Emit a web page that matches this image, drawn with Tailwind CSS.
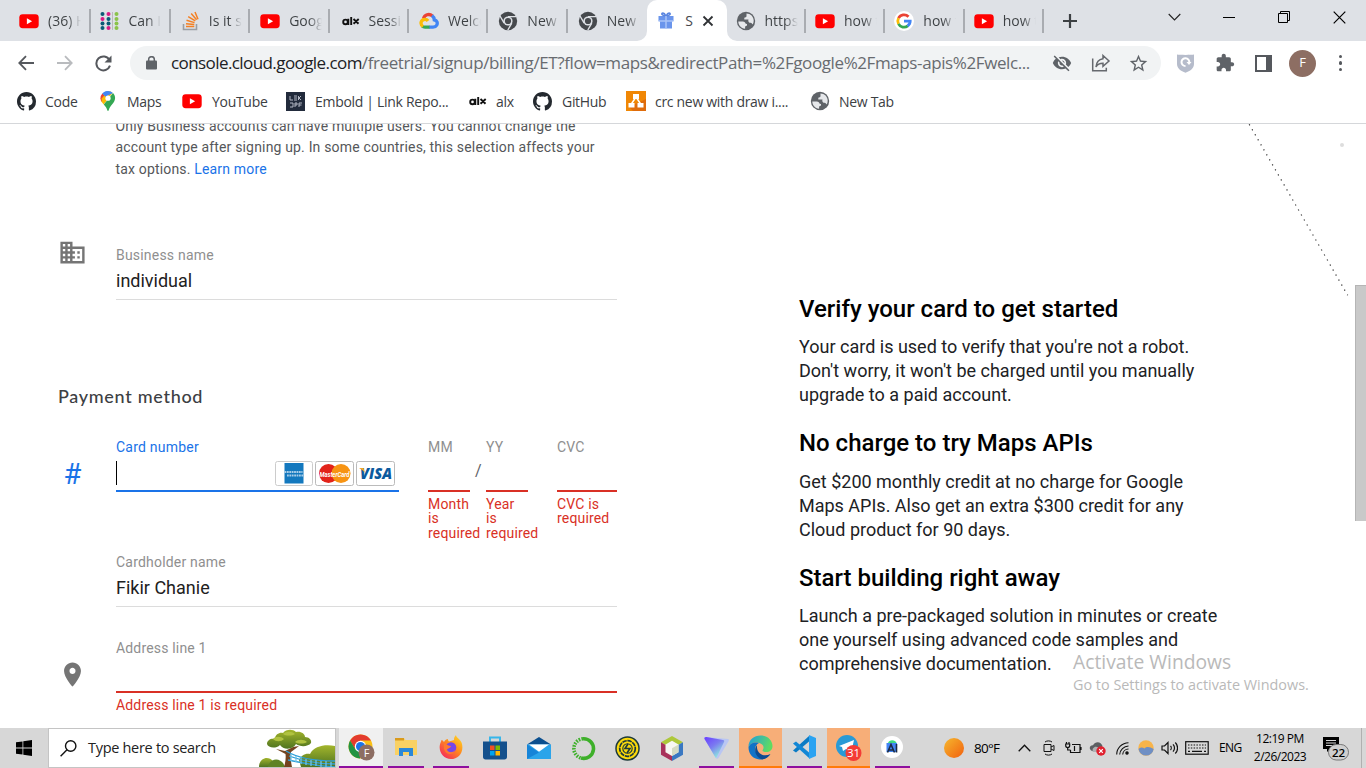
<!DOCTYPE html>
<html lang="en">
<head>
<meta charset="utf-8">
<title>Google Cloud sign up</title>
<script src="https://cdn.jsdelivr.net/npm/@tailwindcss/browser@4"></script>
</head>
<body class="relative w-[1366px] h-[768px] overflow-hidden bg-white flex flex-col font-['Roboto',sans-serif]">
<svg class="absolute w-0 h-0">
  <defs>
    <linearGradient id="sun" x1="0" y1="0" x2="1" y2="1"><stop offset="0" stop-color="#f5b82e"/><stop offset="1" stop-color="#f2600f"/></linearGradient>
    <linearGradient id="edgeA" x1="0" y1="0" x2="1" y2="0.3"><stop offset="0" stop-color="#1f9de0"/><stop offset="1" stop-color="#5edb62"/></linearGradient>
    <linearGradient id="proton" x1="0" y1="0" x2="0.7" y2="1"><stop offset="0" stop-color="#6a3dff"/><stop offset="0.5" stop-color="#7b7bf0"/><stop offset="1" stop-color="#8ff0dd"/></linearGradient>
    <linearGradient id="fox" x1="1" y1="0" x2="0.2" y2="1"><stop offset="0" stop-color="#ffe226"/><stop offset="0.5" stop-color="#ff8a1e"/><stop offset="1" stop-color="#f5275e"/></linearGradient>
    <linearGradient id="leaf" x1="0" y1="0" x2="0" y2="1"><stop offset="0" stop-color="#a3b52c"/><stop offset="1" stop-color="#4f7420"/></linearGradient>
  </defs>
  <symbol id="yt" viewBox="0 0 20 20"><rect x="0.3" y="3.2" width="19.4" height="14" rx="3.4" fill="#f00"/><path d="M7.900 7.200v6l5.200-3z" fill="#fff"/></symbol>
  <symbol id="gh" viewBox="0 0 16 16"><path fill="#24292f" d="M8 0C3.58 0 0 3.58 0 8c0 3.54 2.29 6.53 5.47 7.59.4.07.55-.17.55-.38 0-.19-.01-.82-.01-1.49-2.01.37-2.53-.49-2.69-.94-.09-.23-.48-.94-.82-1.13-.28-.15-.68-.52-.01-.53.63-.01 1.08.58 1.23.82.72 1.21 1.87.87 2.33.66.07-.52.28-.87.51-1.07-1.78-.2-3.64-.89-3.64-3.95 0-.87.31-1.59.82-2.15-.08-.2-.36-1.02.08-2.12 0 0 .67-.21 2.2.82.64-.18 1.32-.27 2-.27s1.36.09 2 .27c1.53-1.04 2.2-.82 2.2-.82.44 1.1.16 1.92.08 2.12.51.56.82 1.27.82 2.15 0 3.07-1.87 3.75-3.65 3.95.29.25.54.73.54 1.48 0 1.07-.01 1.93-.01 2.2 0 .21.15.46.55.38A8.01 8.01 0 0 0 16 8c0-4.42-3.58-8-8-8z"/></symbol>
  <symbol id="chromegrey" viewBox="0 0 20 20"><circle cx="10" cy="10" r="9.2" fill="#46494d"/><path d="M10 5.6h8.2M6.200 12.200L2 5M13.800 12.200L9.800 19" stroke="#dee1e6" stroke-width="1.4" fill="none"/><circle cx="10" cy="10" r="4.6" fill="#dee1e6"/><circle cx="10" cy="10" r="3.1" fill="#46494d"/></symbol>
  <symbol id="globe" viewBox="0 0 20 20"><circle cx="10" cy="10" r="9.200" fill="#5f6368"/><path d="M2.300 10.500h4.500c1.800 0 2.600 1.200 2.900 2.200l1.300.2v1.600l-1.900.9v2.300C5 17.400 2.300 14 2.300 10.500zM10.500 2.400c4 0 7.200 3.200 7.200 7.300 0 1.300-.4 2.600-1 3.700-.7-1.300-1.800-1.700-3.200-1.700-1.200-.8-1.500-1.900-1-3.100H8.300V6.800c1-.2 1.900-.5 2.200-1.500z" fill="#e6e8eb"/></symbol>
  <symbol id="alx" viewBox="0 0 20 20"><g fill="none" stroke="#111" stroke-width="1.900"><circle cx="4.500" cy="10.900" r="2.300"/><path d="M7.300 7.800v6.300M10.200 6v8.100M12.500 8l5 4.800M17.700 8l-5.200 4.800"/></g></symbol>
</svg>

<!-- Tab strip -->
<div class="h-[41px] shrink-0 bg-[#dee1e6] flex items-center pl-[12px] font-['Open_Sans',sans-serif] text-[14px] text-[#45484c]">
  <div class="w-[79.4px] h-6 flex items-center pl-[7px] border-r-2 border-[#a9acb1]"><svg class="size-5 shrink-0"><use href="#yt"/></svg><span class="ml-[9px] w-[33px] overflow-hidden whitespace-nowrap bg-linear-to-r from-[#3c4043] from-60% to-transparent bg-clip-text text-transparent">(36) H</span></div>
  <div class="w-[79.4px] h-6 flex items-center pl-[9px] border-r-2 border-[#a9acb1]"><svg class="size-5 shrink-0" viewBox="0 0 20 20"><g fill="#d81b84"><circle cx="8.5" cy="3" r="2"/><circle cx="2.5" cy="8" r="2"/><circle cx="8.5" cy="17" r="2"/></g><g fill="#0b5a75"><circle cx="2.5" cy="3" r="2"/><circle cx="8.5" cy="8" r="2"/><circle cx="2.5" cy="12.5" r="2"/><circle cx="8.5" cy="12.5" r="2"/><circle cx="2.5" cy="17" r="2"/></g><g fill="#8bc34a"><circle cx="16.5" cy="3" r="2"/><circle cx="16.5" cy="8" r="2"/><circle cx="16.5" cy="12.5" r="2"/><circle cx="16.5" cy="17" r="2"/></g><path d="M12.500 1v18" stroke="#bbb"/></svg><span class="ml-2 w-[33px] overflow-hidden whitespace-nowrap bg-linear-to-r from-[#3c4043] from-60% to-transparent bg-clip-text text-transparent">Can I</span></div>
  <div class="w-[79.4px] h-6 flex items-center pl-[10px] border-r-2 border-[#a9acb1]"><svg class="size-5 shrink-0" viewBox="0 0 20 20"><path d="M2.500 13v5.500h13V13" fill="none" stroke="#9b9ea3" stroke-width="1.6"/><path d="M5 15.600h8.300M5 12.700l8.300.9M5.500 9.200l8 2.400M7.200 5.600l7.100 4.300M10.200 2.600l5.400 6.200M14 1l3 7.200" stroke="#f48024" stroke-width="1.5"/></svg><span class="ml-2 w-[33px] overflow-hidden whitespace-nowrap bg-linear-to-r from-[#3c4043] from-60% to-transparent bg-clip-text text-transparent">Is it s</span></div>
  <div class="w-[79.4px] h-6 flex items-center pl-[10px] border-r-2 border-[#a9acb1]"><svg class="size-5 shrink-0"><use href="#yt"/></svg><span class="ml-[9px] w-[33px] overflow-hidden whitespace-nowrap bg-linear-to-r from-[#3c4043] from-60% to-transparent bg-clip-text text-transparent">Goog</span></div>
  <div class="w-[79.4px] h-6 flex items-center pl-[11px] border-r-2 border-[#a9acb1]"><svg class="size-5 shrink-0"><use href="#alx"/></svg><span class="ml-2 w-[33px] overflow-hidden whitespace-nowrap bg-linear-to-r from-[#3c4043] from-60% to-transparent bg-clip-text text-transparent">Sessi</span></div>
  <div class="w-[79.4px] h-6 flex items-center pl-[10px] border-r-2 border-[#a9acb1]"><svg class="size-5 shrink-0" viewBox="0 0 20 20" fill="none" stroke-width="3.3"><path d="M4.500 7.700C5.500 3.800 10 2.100 13.500 5" stroke="#ea4335"/><path d="M13 4.600c1.800 1.300 2.200 2.500 2.300 4.200 2.800.6 3.600 3.300 2.400 5.400-.8 1.400-2 1.900-3.700 1.900h-4" stroke="#4285f4"/><path d="M10.500 16.100H6c-1 0-2-.3-2.700-1" stroke="#34a853"/><path d="M4 15.500C.6 13.200 1.900 8.300 6 8.300c1.200 0 2.300.6 3 1.700" stroke="#fbbc05"/></svg><span class="ml-[9px] w-[33px] overflow-hidden whitespace-nowrap bg-linear-to-r from-[#3c4043] from-60% to-transparent bg-clip-text text-transparent">Welco</span></div>
  <div class="w-[79.4px] h-6 flex items-center pl-[10px] border-r-2 border-[#a9acb1]"><svg class="size-5 shrink-0"><use href="#chromegrey"/></svg><span class="ml-[9px] w-[33px] overflow-hidden whitespace-nowrap bg-linear-to-r from-[#3c4043] from-60% to-transparent bg-clip-text text-transparent">New T</span></div>
  <div class="w-[79.4px] h-6 flex items-center pl-[10px]"><svg class="size-5 shrink-0"><use href="#chromegrey"/></svg><span class="ml-[9px] w-[33px] overflow-hidden whitespace-nowrap bg-linear-to-r from-[#3c4043] from-60% to-transparent bg-clip-text text-transparent">New T</span></div>
  <div class="relative w-[79.4px] h-[41px] bg-white rounded-t-[10px] flex items-center pl-[10px]">
    <svg class="absolute -left-[10px] bottom-0 size-[10px]" viewBox="0 0 10 10"><path d="M10 0v10H0A10 10 0 0 0 10 0z" fill="#fff"/></svg>
    <svg class="absolute -right-[10px] bottom-0 size-[10px]" viewBox="0 0 10 10"><path d="M0 0v10h10A10 10 0 0 1 0 0z" fill="#fff"/></svg>
    <svg class="size-[18px]" viewBox="0 0 18 18"><path d="M1.500 4h15v5h-15zM3 9h12v7.500H3z" fill="#6a95ec"/><path d="M9 4C5 4 3.500 1.200 6 1c1.500 0 3 3 3 3s1.500-3 3-3c2.500.2 1 3-3 3z" fill="none" stroke="#5b86e0" stroke-width="1.5"/><path d="M9 4v12.500M1.500 9h15" stroke="#a9c3f7" stroke-width="1.5"/></svg>
    <span class="ml-[10px] w-[8px]">S</span>
    <svg class="ml-[9px] size-[12px]" viewBox="0 0 12 12"><path d="M1.500 1.500l9 9M10.500 1.500l-9 9" stroke="#2f3235" stroke-width="1.8"/></svg>
  </div>
  <div class="w-[79.4px] h-6 flex items-center pl-[9px] border-r-2 border-[#a9acb1]"><svg class="size-5 shrink-0"><use href="#globe"/></svg><span class="ml-[9px] w-[33px] overflow-hidden whitespace-nowrap bg-linear-to-r from-[#3c4043] from-60% to-transparent bg-clip-text text-transparent">https:</span></div>
  <div class="w-[79.4px] h-6 flex items-center pl-[9px] border-r-2 border-[#a9acb1]"><svg class="size-5 shrink-0"><use href="#yt"/></svg><span class="ml-[9px] w-[33px] overflow-hidden whitespace-nowrap bg-linear-to-r from-[#3c4043] from-60% to-transparent bg-clip-text text-transparent">how t</span></div>
  <div class="w-[79.4px] h-6 flex items-center pl-[9px] border-r-2 border-[#a9acb1]"><svg class="size-5 shrink-0" viewBox="0 0 20 20"><circle cx="10" cy="10" r="10" fill="#fff"/><g fill="none" stroke-width="2.8"><path d="M14.500 5.700A6.200 6.200 0 0 0 4.500 7.200" stroke="#ea4335"/><path d="M4.500 7.200a6.200 6.200 0 0 0 0 5.600" stroke="#fbbc05"/><path d="M4.500 12.800a6.200 6.200 0 0 0 9.300 2.100" stroke="#34a853"/><path d="M13.600 15c1.800-1.300 2.600-2.800 2.600-4.900H10" stroke="#4285f4"/></g></svg><span class="ml-[9px] w-[33px] overflow-hidden whitespace-nowrap bg-linear-to-r from-[#3c4043] from-60% to-transparent bg-clip-text text-transparent">how t</span></div>
  <div class="w-[79.4px] h-6 flex items-center pl-[9px] border-r-2 border-[#a9acb1]"><svg class="size-5 shrink-0"><use href="#yt"/></svg><span class="ml-[9px] w-[33px] overflow-hidden whitespace-nowrap bg-linear-to-r from-[#3c4043] from-60% to-transparent bg-clip-text text-transparent">how t</span></div>
  <svg class="ml-[18px] size-[16px] shrink-0" viewBox="0 0 16 16"><path d="M8 1v14M1 8h14" stroke="#3c4043" stroke-width="2.2"/></svg>
  <div class="ml-auto h-[34px] self-start flex items-center pr-[20px]">
    <svg class="w-[13px] h-[8px] mr-[42px]" viewBox="0 0 13 8"><path d="M.7 1l5.800 6 5.800-6" fill="none" stroke="#222" stroke-width="1.1"/></svg>
    <div class="w-3 h-px bg-black mr-[43px]"></div>
    <svg class="size-[12px] mr-[43px]" viewBox="0 0 12 12" fill="none" stroke="#000"><path d="M.5 2.500h9v9h-9zM2.500 2.500v-2h9v9h-2"/></svg>
    <svg class="size-[13px]" viewBox="0 0 13 13"><path d="M.7.700l11.600 11.600M12.300.700L.7 12.300" stroke="#000" stroke-width="1.2"/></svg>
  </div>
</div>

<!-- Toolbar -->
<div class="h-[44px] shrink-0 flex items-center pl-[18px] pr-[21px] font-['Open_Sans',sans-serif]">
  <svg class="w-4 h-4" viewBox="0 0 16 16" fill="none" stroke="#55585d" stroke-width="1.8"><path d="M16 8H1.500M8 1.200L1.300 8 8 14.800"/></svg>
  <svg class="ml-[23px] w-4 h-4" viewBox="0 0 16 16" fill="none" stroke="#b9bbbe" stroke-width="1.8"><path d="M0 8h14.500M8 1.200L14.700 8 8 14.800"/></svg>
  <svg class="ml-[22px] size-[17px]" viewBox="0 0 17 17"><path d="M14.500 5A7 7 0 1 0 15 10.700" fill="none" stroke="#55585d" stroke-width="2"/><path d="M16.500.5v7h-7z" fill="#55585d"/></svg>
  <div class="ml-[18px] w-[1031px] h-[34px] rounded-full bg-[#f1f3f4] flex items-center pl-4">
    <svg class="w-[11px] h-[14px]" viewBox="0 0 11 14"><rect y="4.5" width="11" height="9" rx="1" fill="#5f6368"/><path d="M2.700 5V3.200a2.800 2.500 0 0 1 5.600 0V5" fill="none" stroke="#5f6368" stroke-width="1.5"/></svg>
    <div class="ml-[14px] w-[862px] whitespace-nowrap text-[17px] tracking-[-0.4px] text-[#686b70]"><span class="tracking-[-0.58px] text-[#202124]">console.cloud.google.com</span>/freetrial/signup/billing/ET?flow=maps&amp;redirectPath=%2Fgoogle%2Fmaps-apis%2Fwelc...</div>
    <svg class="ml-[19px] size-5" viewBox="0 0 24 24"><path fill="#5f6368" d="M12 7c2.760 0 5 2.240 5 5 0 .65-.13 1.260-.36 1.830l2.920 2.920c1.510-1.260 2.700-2.890 3.430-4.750-1.730-4.390-6-7.500-11-7.500-1.400 0-2.740.25-3.980.7l2.160 2.160C10.740 7.130 11.350 7 12 7zM2 4.270l2.280 2.280.46.460C3.080 8.300 1.780 10.020 1 12c1.730 4.390 6 7.500 11 7.500 1.550 0 3.030-.3 4.380-.84l.42.420L19.730 22 21 20.730 3.270 3 2 4.270zM7.530 9.800l1.550 1.550c-.05.21-.08.430-.08.650 0 1.660 1.340 3 3 3 .22 0 .44-.03.650-.08l1.550 1.550c-.67.33-1.410.530-2.200.530-2.760 0-5-2.240-5-5 0-.79.2-1.530.530-2.200zm4.310-.78l3.150 3.150.02-.16c0-1.660-1.340-3-3-3l-.17.010z"/></svg>
    <svg class="ml-[19px] size-5" viewBox="0 0 20 20" fill="none" stroke="#66696e" stroke-width="1.5"><path d="M1.700 5.500v12.300h13.600v-3"/><path d="M12 2.500l6 5.500-6 5.300v-3c-3.500 0-5.500 1-7 3.700.3-4 2.500-7.700 7-8.300z"/></svg>
    <svg class="ml-[17px] size-[21px]" viewBox="0 0 24 24"><path fill="#5f6368" d="M22 9.240l-7.190-.62L12 2 9.190 8.630 2 9.240l5.460 4.730L5.820 21 12 17.270 18.180 21l-1.630-7.030L22 9.240zM12 15.400l-3.760 2.270 1-4.280-3.320-2.880 4.380-.38L12 6.100l1.710 4.040 4.380.38-3.320 2.880 1 4.280L12 15.400z"/></svg>
  </div>
  <svg class="ml-[16px] w-[17px] h-5" viewBox="0 0 17 20"><path d="M0 1.500C3 2 14 2 17 1.500V11c0 4.500-4 7-8.500 8.800C4 18 0 15.500 0 11z" fill="#b6bccb"/><path d="M12.300 9.500A3.900 3.900 0 1 0 8.500 13" fill="none" stroke="#fff" stroke-width="2"/><path d="M9.500 9h5l-2.500 3z" fill="#fff"/></svg>
  <svg class="ml-[21px] size-5" viewBox="0 0 24 24"><path fill="#5f6368" d="M20.500 11H19V7c0-1.100-.9-2-2-2h-4V3.500C13 2.120 11.880 1 10.500 1S8 2.120 8 3.500V5H4c-1.100 0-1.990.9-1.990 2v3.800H3.500c1.490 0 2.700 1.210 2.700 2.700s-1.210 2.700-2.700 2.700H2V20c0 1.100.9 2 2 2h3.800v-1.500c0-1.490 1.210-2.700 2.700-2.700 1.490 0 2.700 1.210 2.700 2.700V22H17c1.100 0 2-.9 2-2v-4h1.500c1.380 0 2.500-1.120 2.500-2.500S21.880 11 20.500 11z"/></svg>
  <div class="ml-[20px] w-[17px] h-[17px] border-2 border-r-[6px] border-[#55585d]"></div>
  <div class="ml-[17px] size-[27px] rounded-full bg-[#8d6e63] text-white text-[13px] flex items-center justify-center">F</div>
  <div class="ml-auto mr-[3px] flex flex-col gap-[3px]"><i class="size-[3.3px] rounded-full bg-[#55585d]"></i><i class="size-[3.3px] rounded-full bg-[#55585d]"></i><i class="size-[3.3px] rounded-full bg-[#55585d]"></i></div>
</div>

<!-- Bookmarks -->
<div class="h-[39px] shrink-0 border-b border-[#d5d7da] flex items-center pb-[6px] pl-[17px] font-['Open_Sans',sans-serif] text-[14px] tracking-[-0.3px] text-[#3c4043] whitespace-nowrap">
  <div class="w-[83px] flex items-center"><svg class="size-[19px] mr-[9px]"><use href="#gh"/></svg>Code</div>
  <div class="w-[82px] flex items-center"><svg class="w-4 h-5 mr-[11px]" viewBox="0 0 16 20"><path d="M8 0a7.200 7.200 0 0 0-5.600 2.600L6 6z" fill="#1a73e8"/><path d="M2.400 2.600A7 7 0 0 0 1.700 11L6 6z" fill="#ea4335"/><path d="M1.700 11l2 2.500L12.500 2C11.300.700 9.700 0 8 0L1.700 7.500z" fill="#fbbc04"/><path d="M8 0a7.200 7.200 0 0 1 5 2L5.500 5.800 2.400 2.600A7.200 7.200 0 0 1 8 0z" fill="#4285f4"/><path d="M13 2c4 4.500 1.500 8.500-.8 11.300C10.500 15.500 9.200 17 8.700 19.300c-.3.900-1.100.9-1.400 0C6.800 17 5.500 15.500 3.800 13.500z" fill="#34a853"/><circle cx="8" cy="7.200" r="2.600" fill="#fff"/></svg>Maps</div>
  <div class="w-[104px] flex items-center"><svg class="size-5 mr-[10px]"><use href="#yt"/></svg>YouTube</div>
  <div class="w-[182px] flex items-center"><svg class="size-[19px] mr-[10px]" viewBox="0 0 19 19"><rect width="19" height="19" fill="#222b3c"/><path d="M4 4v4h3M8 4h3M8 6h3M8 8h3M12.500 4v4M15 4l-2 2 2 2M4 11h3v4H4M9 11v4M9 11h2v2H9M13 15v-4h3M13 13h2.500" stroke="#b3b8c4" fill="none"/></svg>Embold | Link Repo...</div>
  <div class="w-[65px] flex items-center"><svg class="size-5 mr-[8px]"><use href="#alx"/></svg>alx</div>
  <div class="w-[93px] flex items-center"><svg class="size-[19px] mr-[10px]"><use href="#gh"/></svg>GitHub</div>
  <div class="w-[184px] flex items-center"><svg class="size-5 mr-[9px]" viewBox="0 0 20 20"><path d="M0 0h20v20H0z" fill="#f08705"/><path d="M20 8v12H7l-4-4z" fill="#df6c0c"/><path d="M10 6L5 13.500M10 6l5 7.500" stroke="#fff" stroke-width="1.5"/><path d="M7 3h6v5H7zM2.500 12h6v4.500h-6zM11.500 12h6v4.500h-6z" fill="#fff"/></svg>crc new with draw i....</div>
  <div class="flex items-center"><svg class="size-5 mr-[9px]"><use href="#globe"/></svg>New Tab</div>
</div>

<!-- Page -->
<main class="relative h-[604px] overflow-hidden flex">
  <div class="w-[799px] pl-[58px] shrink-0">
    <p class="-mt-[8.5px] ml-[57.5px] w-[520px] text-[14px] leading-[21.5px] tracking-[0.17px] text-[#55575a]">Only Business accounts can have multiple users. You cannot change the<br>account type after signing up. In some countries, this selection affects your<br>tax options. <a class="text-[#1a73e8]">Learn more</a></p>

    <div class="mt-[60px] h-[60px] flex">
      <svg class="w-[58px] h-[29px] -mt-[2px] pr-[29px]" viewBox="0 0 24 24"><path fill="#757575" d="M12 7V3H2v18h20V7H12zM6 19H4v-2h2v2zm0-4H4v-2h2v2zm0-4H4V9h2v2zm0-4H4V5h2v2zm4 12H8v-2h2v2zm0-4H8v-2h2v2zm0-4H8V9h2v2zm0-4H8V5h2v2zm10 12h-8v-2h2v-2h-2v-2h2v-2h-2V9h8v10zm-2-8h-2v2h2v-2zm0 4h-2v2h2v-2z"/></svg>
      <div class="w-[501px] pt-[5px] border-b border-[#dcdcdc]">
        <div class="h-5 leading-5 text-[14px] tracking-[0.2px] text-[#8f8f8f]">Business name</div>
        <div class="mt-[2px] h-7 leading-7 text-[18px] text-[#212121]">individual</div>
      </div>
    </div>

    <h2 class="mt-[84px] h-6 leading-6 text-[18px] font-medium tracking-[0.7px] text-[#3c4043] font-['Lato',sans-serif]">Payment method</h2>

    <div class="mt-[29px] h-[115px] flex">
      <div class="w-[58px] pt-[20px] pl-[5.5px] text-[29px] leading-[34px] text-[#1a73e8]">#</div>
      <div class="w-[283px]">
        <div class="h-5 leading-5 text-[14px] tracking-[0.22px] text-[#1a73e8]">Card number</div>
        <div class="h-[35px] border-b-2 border-[#1a73e8] flex items-start justify-end pr-[4px] gap-[2px] pt-[4px]">
          <div class="w-px h-6 bg-black mr-auto"></div>
          <svg class="w-[38px] h-[25px]" viewBox="0 0 38 25"><rect x=".5" y=".5" width="37" height="24" rx="2" fill="#fff" stroke="#ccc"/><rect x="9.500" y="2" width="19" height="20.5" fill="#1378be"/><path d="M9.500 11h18M12 14.500h16" stroke="#a9cde8" stroke-width="2.2" stroke-dasharray="1.8 .6"/></svg>
          <svg class="w-[39px] h-[25px]" viewBox="0 0 39 25"><rect x=".5" y=".5" width="38" height="24" rx="2" fill="#fff" stroke="#bbb"/><circle cx="13.500" cy="12.500" r="9.500" fill="#e2231a"/><circle cx="26" cy="12.500" r="9.500" fill="#f79413"/><text x="4.500" y="15.500" font-size="7.500" font-weight="bold" font-style="italic" fill="#fff" textLength="30" lengthAdjust="spacingAndGlyphs">MasterCard</text></svg>
          <svg class="w-[39px] h-[25px]" viewBox="0 0 39 25"><rect x=".5" y=".5" width="38" height="24" rx="2" fill="#fff" stroke="#bbb"/><text x="4" y="18" font-family="Open Sans" font-size="15" font-weight="800" font-style="italic" fill="#0b5a9e" textLength="32" lengthAdjust="spacingAndGlyphs">VISA</text><path d="M3 7h4.500l1.500 5C7.500 10 6 8.500 3 7z" fill="#f5a623"/></svg>
        </div>
      </div>
      <div class="ml-[29px] w-[42px] text-[14px] tracking-[0.17px]">
        <div class="h-5 leading-5 text-[#8f8f8f]">MM</div>
        <div class="h-[35px] border-b-2 border-[#d93025]"></div>
        <div class="mt-[5px] leading-[14.3px] text-[#d93025]">Month is required</div>
      </div>
      <div class="w-4 pt-[24px] pl-[5px] text-[16px] leading-[20px] text-[#5f6368]">/</div>
      <div class="w-[42px] text-[14px] tracking-[0.17px]">
        <div class="h-5 leading-5 text-[#8f8f8f]">YY</div>
        <div class="h-[35px] border-b-2 border-[#d93025]"></div>
        <div class="mt-[5px] leading-[14.3px] text-[#d93025]">Year<br>is required</div>
      </div>
      <div class="ml-[29px] w-[60px] text-[14px] tracking-[0.17px]">
        <div class="h-5 leading-5 text-[#8f8f8f]">CVC</div>
        <div class="h-[35px] border-b-2 border-[#d93025]"></div>
        <div class="mt-[5px] leading-[14.3px] text-[#d93025]">CVC is required</div>
      </div>
    </div>

    <div class="ml-[58px] w-[501px] h-[55px] border-b border-[#dcdcdc]">
      <div class="h-5 leading-5 text-[14px] tracking-[0.2px] text-[#8f8f8f]">Cardholder name</div>
      <div class="mt-[2px] h-7 leading-7 text-[18px] text-[#212121]">Fikir Chanie</div>
    </div>

    <div class="mt-[31px] flex">
      <svg class="w-[58px] h-[29px] mt-[22px] pr-[29px]" viewBox="0 0 24 24"><path fill="#757575" d="M12 2C8.130 2 5 5.130 5 9c0 5.250 7 13 7 13s7-7.750 7-13c0-3.870-3.130-7-7-7zm0 9.500c-1.380 0-2.500-1.120-2.500-2.500s1.120-2.500 2.500-2.500 2.500 1.120 2.500 2.500-1.120 2.500-2.500 2.500z"/></svg>
      <div class="w-[501px] text-[14px] tracking-[0.17px]">
        <div class="h-[55px] leading-5 border-b-2 border-[#d93025] text-[#8f8f8f]">Address line 1</div>
        <div class="mt-[2px] leading-5 text-[#d93025]">Address line 1 is required</div>
      </div>
    </div>
  </div>

  <div class="w-[440px] pt-[170px] text-[18px] leading-6 text-[#202124]">
    <h3 class="text-[24px] leading-[30px] font-medium text-black">Verify your card to get started</h3>
    <p class="mt-[11px]">Your card is used to verify that you're not a robot.<br>Don't worry, it won't be charged until you manually<br>upgrade to a paid account.</p>
    <h3 class="mt-[21px] text-[24px] leading-[30px] font-medium text-black">No charge to try Maps APIs</h3>
    <p class="mt-[12px]">Get $200 monthly credit at no charge for Google<br>Maps APIs. Also get an extra $300 credit for any<br>Cloud product for 90 days.</p>
    <h3 class="mt-[21px] text-[24px] leading-[30px] font-medium text-black">Start building right away</h3>
    <p class="mt-[11px]">Launch a pre-packaged solution in minutes or create<br>one yourself using advanced code samples and<br>comprehensive documentation.</p>
  </div>

  <svg class="absolute left-[1240px] top-0 w-[115px] h-[180px]" viewBox="0 0 115 180"><path d="M9.200.3L107.700 171.300" stroke="#333" stroke-width="1.2" stroke-dasharray="1.200 4.580"/><circle cx="102" cy="21" r="2" fill="#ddd"/></svg>
  <div class="ml-auto mt-[161px] w-[11px] h-[236px] bg-[#c9c9c9] border-t border-l border-[#b5b5b5]"></div>
  <div class="absolute left-[1073px] top-[525px] font-['Open_Sans',sans-serif] text-[#b9b9b9] whitespace-nowrap">
    <div class="text-[19.3px] leading-[26px]">Activate Windows</div>
    <div class="text-[14.4px] leading-5">Go to Settings to activate Windows.</div>
  </div>
</main>

<!-- Taskbar -->
<footer class="h-10 shrink-0 bg-[#d7d7d7] flex items-stretch font-['Open_Sans',sans-serif] text-black">
  <div class="w-[48px] flex items-center justify-center"><svg class="size-4" viewBox="0 0 16 16"><path d="M0 2.300l6.500-.9v6.200H0zM7.300 1.200L16 0v7.600H7.300zM0 8.400h6.500v6.200L0 13.700zM7.300 8.400H16V16l-8.700-1.200z"/></svg></div>
  <div class="w-[288px] bg-white border border-[#c4c4c4] flex items-center pl-[11px]">
    <svg class="w-[17px] h-[17px] shrink-0" viewBox="0 0 17 17" fill="none" stroke="#111" stroke-width="1.4"><circle cx="10.700" cy="6" r="5.2"/><path d="M7 9.700L.6 16.300"/></svg>
    <span class="ml-[11px] text-[14.5px] tracking-[-0.3px] text-[#222] whitespace-nowrap">Type here to search</span>
    <svg class="ml-auto w-[76px] h-[38px] shrink-0" viewBox="0 0 76 38"><path d="M40 31c2-4 6-7 11-6C55 17 66 15 76 17v21H42z" fill="url(#leaf)"/><path d="M0 38c0-9 9-12 14-6l3 6z" fill="url(#leaf)"/><path d="M9 38c2-10 14-10 17 0z" fill="#5f8324"/><path d="M25 38c1.500-5 2-9 1.500-13L17 20l9 2 8-4 6-1-8 6c-1 5 0 10 1 15z" fill="#74431f"/><path d="M8 15c0-4 4-6 8-5 0-5 5-7 8-6 3-4 10-4 13-1 5-1 9 2 9 5 4 0 7 3 6 6-3 4-11 4-15 1-3 6-13 6-16 1-4 4-12 3-13-1z" fill="url(#leaf)"/><path d="M14 10c2-3 8-3 11 0-3 3-8 3-11 0zM24 5c3-3 9-3 12 0-3 2-9 2-12 0zM36 13c3-3 9-3 12 0-3 2-9 2-12 0z" fill="#b0c240"/><path d="M27 22c10 6 28 10 49 10M29 31c14 3 28 6 47 7M30 27c14 5 28 8 46 8" stroke="#2e9fd8" stroke-width="1.3" fill="none"/><path d="M32 25v7M37 27v6M42 28v7M47 30v6M52 31v6M57 31v6M62 32v6M67 32v6M72 33v5" stroke="#6ec3ea" stroke-width="1.3"/></svg>
  </div>
  <div class="ml-[3px] w-[44px] bg-[#f0f0f0] border-b-2 border-[#8e0f9e] flex items-center justify-center"><svg class="size-[27px]" viewBox="0 0 27 27"><circle cx="12.500" cy="12.500" r="12" fill="#fbc116"/><path d="M2.100 6.500A12 12 0 0 1 23 6.500H12.500L7.300 15.500z" fill="#e33b2e"/><path d="M2.100 6.500L7.500 15.500 14 17l-2 7.500A12 12 0 0 1 2.100 6.500z" fill="#229342"/><circle cx="12.500" cy="12.500" r="5.700" fill="#fff"/><circle cx="12.500" cy="12.500" r="4.500" fill="#1a73e8"/><circle cx="18.500" cy="18.500" r="8" fill="#8d6e63"/><text x="18.500" y="22.500" font-family="Open Sans" font-size="11" text-anchor="middle" fill="#fff">F</text></svg></div>
  <div class="ml-[5px] w-[36px] border-b-2 border-[#8e0f9e] flex items-center justify-center"><svg class="w-[22px] h-[20px]" viewBox="0 0 22 20"><path d="M0 1h9l1.500 2H22v15H0z" fill="#f9d163"/><path d="M0 1h9v2.500H0z" fill="#d99a1c"/><path d="M4 11h14v8h-4v-4H8v4H4z" fill="#2b88d8"/></svg></div>
  <div class="ml-[9px] w-[36px] border-b-2 border-[#8e0f9e] flex items-center justify-center"><svg class="size-[24px]" viewBox="0 0 24 24"><path d="M2.500 5c1 .3 2 1.200 2.500 2C6 5 7.500 4 9 4c-.3 1 .2 2 1 2.500L15 5c0-2 .5-3.500 2-5 0 3 5 4 6 9 2 9-4 15-11 15S0 18 .7 11C1 8.500 2 7 2.500 5z" fill="url(#fox)"/><circle cx="12" cy="12.500" r="5.300" fill="#7846e8"/><path d="M5 9c3 0 4 2 7 2-1 3-4 2-4 4 2 3 6 3 8 0-1 5-9 6-11-1z" fill="#ff7a2f"/></svg></div>
  <div class="ml-[4px] w-[44px] flex items-center justify-center"><svg class="w-[24px] h-[24px]" viewBox="0 0 24 24"><path d="M7 7V1.500h10V7" fill="none" stroke="#37b6ea" stroke-width="2"/><path d="M0 5.500h24V21c0 1.500-1 2.500-2.500 2.500h-19C1 23.500 0 22.500 0 21z" fill="#14508c"/><path d="M7 9.500h4.500V14H7z" fill="#f25022"/><path d="M12.500 9.500H17V14h-4.500z" fill="#7fba00"/><path d="M7 15h4.500v4.500H7z" fill="#00a4ef"/><path d="M12.500 15H17v4.500h-4.500z" fill="#ffb900"/></svg></div>
  <div class="w-[44.4px] flex items-center justify-center"><svg class="w-[24px] h-[24px]" viewBox="0 0 24 24"><path d="M0 8.500L12 1l12 7.500z" fill="#0b4f8f"/><path d="M0 8.500h24V23H0z" fill="#2ba4ea"/><path d="M2 8.500h20l-10 7.300z" fill="#fff"/><path d="M0 8.500l12 8L0 23z" fill="#1684d8"/></svg></div>
  <div class="w-[44.4px] flex items-center justify-center"><svg class="size-[25px]" viewBox="0 0 25 25" fill="none" stroke="#3eb02a"><path d="M12 2.800A9.800 9.800 0 1 1 10 22" stroke-width="3.6"/><path d="M12 2.800A9.800 9.800 0 0 0 10 22" stroke-width="3.6" stroke-dasharray="1.600 1.200"/></svg></div>
  <div class="w-[44.4px] flex items-center justify-center"><svg class="size-[25px]" viewBox="0 0 25 25"><circle cx="12.500" cy="12.500" r="11.500" fill="#fbd90b" stroke="#1d3a3a" stroke-width="1.5"/><circle cx="12.500" cy="12.500" r="7.800" fill="none" stroke="#1d3a3a" stroke-width="1.7" stroke-dasharray="4.500 .7"/><circle cx="12.500" cy="12.500" r="4.700" fill="none" stroke="#1d3a3a" stroke-width="1.1"/><path d="M13 8l-3 4.500h5L12 17" fill="none" stroke="#1d3a3a" stroke-width="1.6"/></svg></div>
  <div class="w-[43.8px] flex items-center justify-center"><svg class="w-[22px] h-[25px]" viewBox="0 0 22 25"><path d="M11 0l11 6.200L11 12.500 0 6.200z" fill="#adc83a"/><path d="M0 6.200l11 6.300V25L0 18.700z" fill="#a8325a"/><path d="M22 6.200l-11 6.300V25l11-6.300z" fill="#3a78c2"/><path d="M11 4.700l6.500 3.800v7.700L11 20l-6.500-3.800V8.500z" fill="#f7f7f2"/><path d="M11 12.200l6.500-3.700v7.700L11 20z" fill="#d5dbc4"/></svg></div>
  <div class="ml-[5px] w-[35px] border-b-2 border-[#8e0f9e] flex items-center justify-center"><svg class="w-[25px] h-[23px]" viewBox="0 0 25 23"><path d="M2.500 1L24 3c1 .2 1 1 .7 2L14.500 22c-.8 1-2 1-2.700 0L.5 3C0 1.500 1 .8 2.500 1z" fill="#b9c6f3"/><path d="M2.500 1L19 4c1.300.3 1.500 1.200 1 2l-7 14.500c-.5.8-1 1.500-1.500 1L.5 3C0 1.500 1 .8 2.500 1z" fill="url(#proton)"/></svg></div>
  <div class="ml-[5px] w-[43px] bg-[#f7ae78] border-b-2 border-[#ff7a0a] flex items-center justify-center"><svg class="size-[25px]" viewBox="0 0 25 25"><path d="M.5 12.500C0 5 6 .5 12.500.5 20 .5 24.500 6 24.500 11c0 4-3 6-6 6-4 0-4.500-1.500-3.500-2.500 1-1.500 1-5-3.500-6.500C6.500 6.500 1.500 8.500.5 12.500z" fill="url(#edgeA)"/><path d="M.5 12.500C1.500 8.500 6.500 6.500 11 8c-3 1.500-4.500 4.500-3.500 8 1.500 5 8 6.500 14.500 3.500-3 4-7 5.300-10.500 5C5 24 .5 19 .5 12.500z" fill="#1173c7"/><path d="M9 10c-4 5-1 12.500 5 14.300C18 24 21 21.500 22.500 19 16 22.500 8 19 9 10z" fill="#0c4c92"/></svg></div>
  <div class="ml-[5px] w-[35px] border-b-2 border-[#8e0f9e] flex items-center justify-center"><svg class="size-[24px]" viewBox="0 0 24 24"><path d="M17 6.500L4 17.500 1 15.500 17 1z" fill="#0a7bc5"/><path d="M17 17.500L4 6.500 1 8.500 17 23z" fill="#1187d6"/><path d="M17 0l7 3v18l-7 3z" fill="#2aa3f2"/></svg></div>
  <div class="ml-[5px] w-[43px] bg-[#f7ae78] border-b-2 border-[#ff7a0a] flex items-center justify-center"><svg class="w-[27px] h-[27px]" viewBox="0 0 27 27"><circle cx="12" cy="12" r="11" fill="#2a9ad6"/><path d="M4 12l15-6-3 13-5-4-3 2-1-4z" fill="#fff"/><circle cx="18.500" cy="19" r="8" fill="#f43c36"/><text x="18.500" y="23.300" font-family="Open Sans" font-size="11.500" text-anchor="middle" fill="#fff">31</text></svg></div>
  <div class="ml-[5px] w-[35px] border-b-2 border-[#8e0f9e] flex items-center justify-center"><svg class="size-[22px]" viewBox="0 0 22 22"><circle cx="11" cy="11" r="11" fill="#fff"/><path d="M5.500 7h10.500v9H5.500z" fill="#4285f4"/><path d="M7 7a4.500 4 0 0 1 8.500 0z" fill="#3ddc84"/><path d="M6.500 16.500L10 8.500l3.500 8M8 14h4.500M15.500 8v8.500" stroke="#1c2b44" stroke-width="1.6" fill="none"/></svg></div>
  <div class="ml-[34px] flex items-center"><svg class="size-5" viewBox="0 0 20 20"><circle cx="10" cy="10" r="10" fill="url(#sun)"/></svg><span class="ml-[10px] w-[27px] text-[13.5px] tracking-[-0.7px] whitespace-nowrap">80°F</span></div>
  <div class="ml-[17px] flex items-center">
    <svg class="w-[13px] h-[8px]" viewBox="0 0 13 8"><path d="M.7 7.300l5.800-6 5.800 6" fill="none" stroke="#111" stroke-width="1.3"/></svg>
    <svg class="ml-[12px] w-[12px] h-[16px]" viewBox="0 0 12 16" fill="none" stroke="#111"><path d="M1 4.500h7v7H1zM8 7l3-1.500v5L8 9M2 2c2-1.500 5-1.500 7 0M2 14c2 1.500 5 1.500 7 0"/></svg>
    <svg class="ml-[10px] w-[17px] h-[12px]" viewBox="0 0 17 12" fill="none" stroke="#111" stroke-width="1.2"><path d="M7 2.500h8v8H5.500V8M16 5v3M.7 2v1.500a2 2 0 0 0 4 0V2zM1.500 0v2M4 0v2M2.700 5.500V8h2.800M9.500 4v5"/></svg>
    <svg class="ml-[7px] w-[17px] h-[15px]" viewBox="0 0 17 15"><path d="M3 10C-1 8 1 4 4 4.300 6 0 12 0 13.500 5L9 11z" fill="#5c5f62"/><path d="M4 11C2 7 7 4 9.500 7L8 11z" fill="#aeb1b3"/><circle cx="12" cy="10" r="4.700" fill="#e0202e"/><path d="M10.200 8.200l3.600 3.600M13.800 8.200l-3.600 3.600" stroke="#fff" stroke-width="1.2"/></svg>
    <svg class="ml-[10px] size-[13px]" viewBox="0 0 13 13" fill="none" stroke="#111" stroke-width="1.1"><path d="M.7 12.500A12 12 0 0 1 12.500.7M3.700 12.500A9 9 0 0 1 12.500 4M6.700 12.500A6 6 0 0 1 12.500 7"/><circle cx="11" cy="11" r="1.200" fill="#111"/></svg>
    <svg class="ml-[9px] size-[16px]" viewBox="0 0 16 16"><circle cx="8" cy="8" r="7.700" fill="#f8b44a"/><path d="M.5 9c2-2 4-2 6-.5C9 6 12 7 15.700 9A7.700 7.700 0 0 1 .5 9z" fill="#6f8fc4"/></svg>
    <svg class="ml-[7px] w-[17px] h-[14px]" viewBox="0 0 17 14" fill="none" stroke="#111" stroke-width="1.2"><path d="M1 5h2.500L7 1.500v11L3.500 9H1zM9.500 5c1 1 1 3 0 4M12 3.300c2 2 2 5.400 0 7.400M14.300 1.500c3 3 3 8 0 11"/></svg>
    <svg class="ml-[7px] w-[24px] h-[14px]" viewBox="0 0 24 14" fill="none" stroke="#111" stroke-width="1.2"><rect x=".7" y=".7" width="22.500" height="12.500"/><path d="M3 4h18M3 7h18" stroke-dasharray="1.500 1.300"/><path d="M3 10.300h2M7 10.300h10M19 10.300h2"/></svg>
    <span class="ml-[10px] w-[24px] text-[12px] tracking-[-0.6px]">ENG</span>
    <div class="ml-[10px] w-[54px] text-[12px] leading-[18px] tracking-[-0.5px] text-center whitespace-nowrap">12:19 PM<br>2/26/2023</div>
    <svg class="ml-[16px] w-[27px] h-[25px]" viewBox="0 0 27 25"><path d="M0 1h16v12H7l-3 3v-3H0z"/><path d="M3 4.500h10M3 7h10M3 9.500h7" stroke="#d7d7d7"/><rect x="5.500" y="8.500" width="20" height="15.500" rx="7.700" fill="#cfcfcf" stroke="#777"/><text x="15.500" y="20.500" font-family="Open Sans" font-size="11.500" font-weight="600" text-anchor="middle">22</text></svg>
  </div>
  <div class="ml-auto mr-[4px] w-px bg-[#b0b0b0]"></div>
</footer>
</body>
</html>
